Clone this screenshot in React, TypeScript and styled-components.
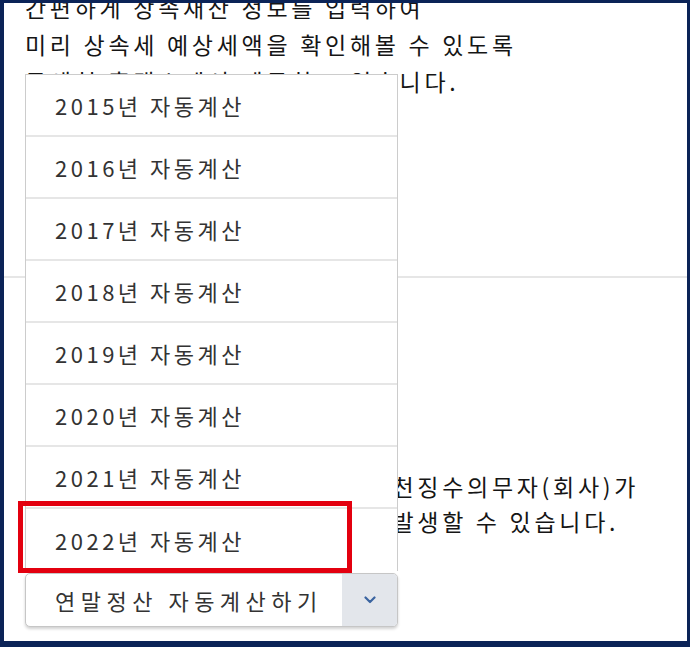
import styled, { createGlobalStyle } from 'styled-components';

const GlobalStyle = createGlobalStyle`
    html, body {
        margin: 0;
        padding: 0;
        background: #ffffff;
    }
    * {
        box-sizing: border-box;
    }
`;

const color = {
    navy: '#0b2357',
    text: '#151515',
    item: '#333333',
    line: '#e6e6e6',
    border: '#cccccc',
    addon: '#e3e6eb',
    chevron: '#3b64a0',
    red: '#e3000f',
};

const font = `'Noto Sans CJK KR', 'Noto Sans', sans-serif`;

const Frame = styled.div`
    width: 690px;
    height: 647px;
    overflow: hidden;
    background: #ffffff;
    border-style: solid;
    border-color: ${color.navy};
    border-width: 3px 3px 6px 4px;
    font-family: ${font};
`;

const Content = styled.div`
    display: flex;
    flex-direction: column;
    margin-top: -14px;
`;

const Paragraph = styled.div<{ $lineHeight: number }>`
    padding-left: 21px;
    font-size: 23px;
    letter-spacing: 3.7px;
    line-height: ${(p) => p.$lineHeight}px;
    color: ${color.text};
    white-space: nowrap;
`;

const Divider = styled.hr`
    margin: 176px 0 0;
    border: none;
    border-top: 2px solid ${color.line};
`;

const Lower = styled(Paragraph)`
    margin-top: 191px;
`;

const SelectWrap = styled.div`
    position: relative;
    margin: 34px 0 0 21px;
    width: 373px;
`;

const Menu = styled.ul`
    position: absolute;
    left: 0;
    right: 0;
    bottom: calc(100% + 2px);
    margin: 0;
    padding: 0;
    list-style: none;
    background: #ffffff;
    border: 1.5px solid ${color.border};
    border-bottom: none;
`;

const MenuItem = styled.li`
    position: relative;
    display: flex;
    align-items: center;
    height: 62px;
    padding-left: 29px;
    font-size: 22px;
    letter-spacing: 3.5px;
    color: ${color.item};
    border-bottom: 2px solid ${color.line};

    &:last-child {
        border-bottom: none;
    }
`;

const Highlight = styled.span`
    position: absolute;
    top: -8px;
    bottom: -2px;
    left: -8px;
    right: 45px;
    border: 5px solid ${color.red};
`;

const SelectBox = styled.div`
    display: flex;
    height: 54px;
    border: 1.5px solid #c6c6c6;
    border-radius: 5px;
    overflow: hidden;
    box-shadow: 0 2px 3px rgba(0, 0, 0, 0.18);
    background: #ffffff;
`;

const SelectLabel = styled.div`
    flex: 1;
    display: flex;
    align-items: center;
    padding-left: 29px;
    font-size: 22px;
    letter-spacing: 5.5px;
    color: ${color.item};
`;

const Addon = styled.div`
    display: flex;
    align-items: center;
    justify-content: center;
    width: 55px;
    background: ${color.addon};
`;

const years = [2015, 2016, 2017, 2018, 2019, 2020, 2021, 2022];

const App = () => {
    return (
        <>
            <GlobalStyle />
            <Frame>
                <Content>
                    <Paragraph $lineHeight={37}>
                        <div>간편하게 상속재산 정보를 입력하여</div>
                        <div>미리 상속세 예상세액을 확인해볼 수 있도록</div>
                        <div>국세청 홈택스에서 제공하고 있습니다.</div>
                    </Paragraph>

                    <Divider />

                    <Lower $lineHeight={35}>
                        <div>연말정산 시 공제 누락 등으로 원천징수의무자(회사)가</div>
                        <div>계산 결과는 실제 세액과 차이가 발생할 수 있습니다.</div>
                    </Lower>

                    <SelectWrap>
                        <Menu>
                            {years.map((year, index) => (
                                <MenuItem key={year}>
                                    {year}년 자동계산
                                    {index === years.length - 1 && <Highlight />}
                                </MenuItem>
                            ))}
                        </Menu>
                        <SelectBox>
                            <SelectLabel>연말정산 자동계산하기</SelectLabel>
                            <Addon>
                                <svg width="12" height="8" viewBox="0 0 12 8" fill="none">
                                    <path
                                        d="M1.5 1.5 L6 6 L10.5 1.5"
                                        stroke={color.chevron}
                                        strokeWidth="2.2"
                                        strokeLinecap="round"
                                        strokeLinejoin="round"
                                    />
                                </svg>
                            </Addon>
                        </SelectBox>
                    </SelectWrap>
                </Content>
            </Frame>
        </>
    );
};

export default App;
